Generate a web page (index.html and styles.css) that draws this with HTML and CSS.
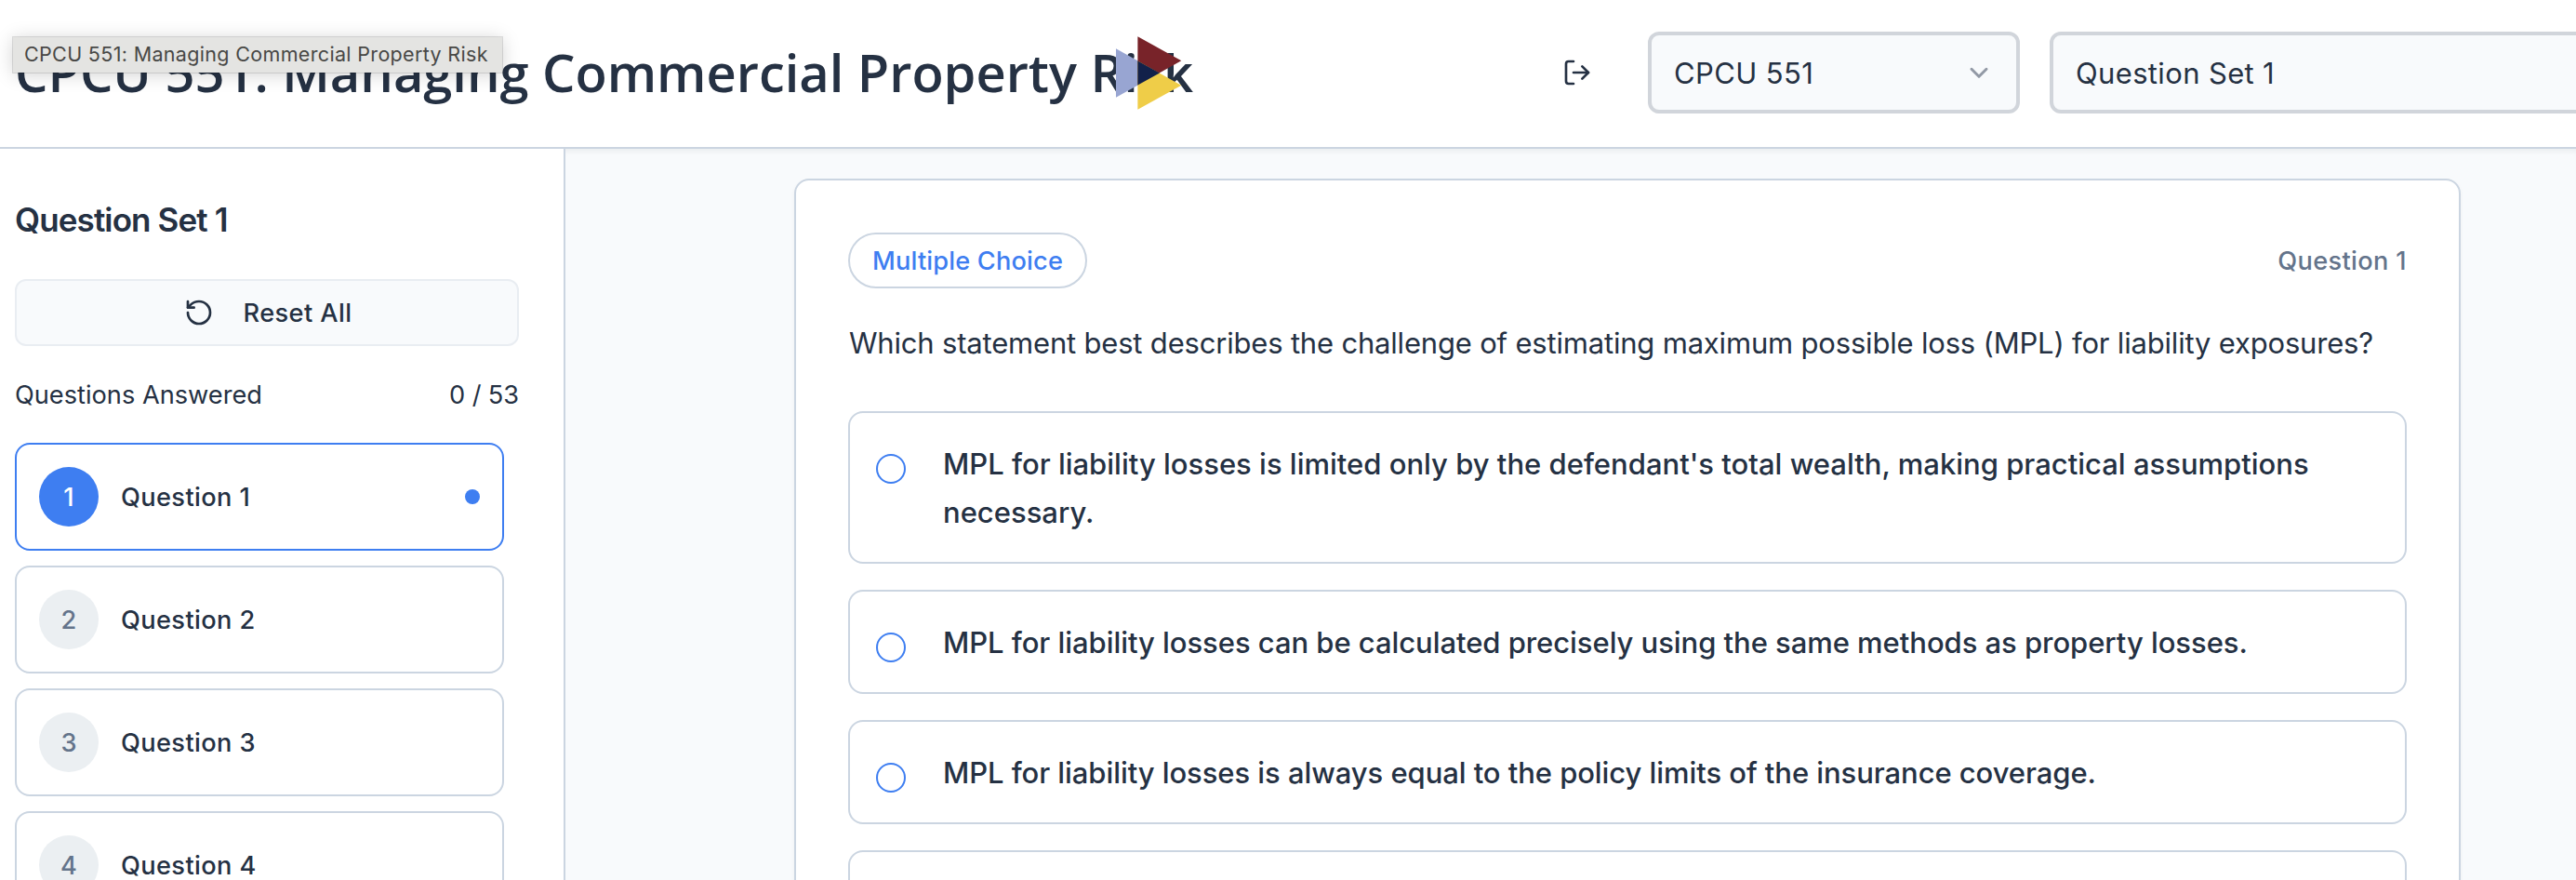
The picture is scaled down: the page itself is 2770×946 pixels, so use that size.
FILE: index.html
```html
<!DOCTYPE html>
<html lang="en">
<head>
<meta charset="utf-8">
<title>CPCU 551: Managing Commercial Property Risk</title>
<link rel="stylesheet" href="styles.css">
</head>
<body>
<header class="header">
  <div class="brand">
    <h1 class="title">CPCU 551: Managing Commercial Property Risk</h1>
    <svg class="logo" viewBox="0 0 72 80" aria-hidden="true">
      <path d="M1 13.3 48 39.5 1 65.7Z" fill="#98a5d2"/>
      <path d="M24.4.2 71.3 26.2 24.4 52.4Z" fill="#782329"/>
      <path d="M24.4 26.6 71.3 52.7 24.4 78.8Z" fill="#efcd48"/>
      <path d="M24.4 26.4 48 39.5 24.4 52.6Z" fill="#12214a"/>
    </svg>
    <div class="tooltip">CPCU 551: Managing Commercial Property Risk</div>
  </div>
  <button class="logout" aria-label="Log out">
    <svg class="icon" viewBox="0 0 24 24"><path d="M9 21H5a2 2 0 0 1-2-2V5a2 2 0 0 1 2-2h4"/><path d="m16 17 5-5-5-5"/><path d="M21 12H9"/></svg>
  </button>
  <div class="selects">
    <div class="select select-course">
      <span class="course-name">CPCU 551</span>
      <svg class="chevron" viewBox="0 0 32 32"><path d="m8 12.3 8 8 8-8"/></svg>
    </div>
    <div class="select select-set"><span class="set-name">Question Set 1</span></div>
  </div>
</header>
<div class="layout">
  <aside class="sidebar">
    <h2 class="side-title">Question Set 1</h2>
    <button class="reset">
      <svg class="icon" viewBox="0 0 24 24"><path d="M3 12a9 9 0 1 0 9-9 9.75 9.75 0 0 0-6.74 2.74L3 8"/><path d="M3 3v5h5"/></svg>
      <span>Reset All</span>
    </button>
    <div class="progress"><span>Questions Answered</span><span class="count">0 / 53</span></div>
    <div class="list">
      <div class="item item-active"><span class="num">1</span><span class="item-label">Question 1</span><span class="dot"></span></div>
      <div class="item"><span class="num">2</span><span class="item-label">Question 2</span></div>
      <div class="item"><span class="num">3</span><span class="item-label">Question 3</span></div>
      <div class="item"><span class="num">4</span><span class="item-label">Question 4</span></div>
    </div>
  </aside>
  <main class="main">
    <section class="card">
      <div class="card-head"><span class="pill">Multiple Choice</span><span class="card-num">Question 1</span></div>
      <p class="prompt">Which statement best describes the challenge of estimating maximum possible loss (MPL) for liability exposures?</p>
      <div class="options">
        <div class="option"><span class="radio"></span><span class="answer answer-a">MPL for liability losses is limited only by the defendant's total wealth, making practical assumptions necessary.</span></div>
        <div class="option"><span class="radio"></span><span class="answer answer-b">MPL for liability losses can be calculated precisely using the same methods as property losses.</span></div>
        <div class="option"><span class="radio"></span><span class="answer answer-c">MPL for liability losses is always equal to the policy limits of the insurance coverage.</span></div>
        <div class="option option-last"></div>
      </div>
    </section>
  </main>
</div>
</body>
</html>
```
FILE: styles.css
```css
:root {
  --ink: #253143;
  --muted: #64748b;
  --line: #cbd5e1;
  --blue: #3e7ef1;
  --surface: #f8fafc;
}
* { box-sizing: border-box; }
html, body { height: 100%; }
body {
  margin: 0;
  display: flex;
  flex-direction: column;
  overflow: hidden;
  background: var(--surface);
  color: var(--ink);
  font-family: Inter, "Liberation Sans", sans-serif;
}
h1, h2, p { margin: 0; }
button { font: inherit; color: inherit; cursor: pointer; }
.icon {
  width: 32px;
  height: 32px;
  flex: none;
  fill: none;
  stroke: currentColor;
  stroke-width: 2;
  stroke-linecap: round;
  stroke-linejoin: round;
}

/* Header */
.header {
  position: relative;
  z-index: 1;
  flex: none;
  display: flex;
  align-items: center;
  height: 160px;
  padding: 0 0 2px 16px;
  background: #fff;
  border-bottom: 2px solid var(--line);
}
.brand { position: relative; flex: none; width: 1664px; }
.title {
  font: 600 56px/80px "Open Sans", "Noto Sans", sans-serif;
  letter-spacing: -.02px;
  white-space: nowrap;
  padding-bottom: 2px;
}
.logo { position: absolute; left: 1183px; top: 2px; width: 72px; height: 80px; }
.tooltip {
  position: absolute;
  left: -2px;
  top: 3px;
  width: 526px;
  height: 38px;
  padding: 0 12px 2px;
  background: #e4e4e2;
  color: #484846;
  font-size: 21.5px;
  line-height: 36px;
  letter-spacing: .333px;
  white-space: nowrap;
  box-shadow: 0 0 0 1px rgba(0, 0, 0, .12), 0 2px 20px rgba(0, 0, 0, .18);
}
.logout { display: flex; flex: none; padding: 0; border: 0; background: none; }
.selects { display: flex; gap: 32px; margin-left: 60px; }
.select {
  display: flex;
  flex: none;
  align-items: center;
  justify-content: space-between;
  height: 88px;
  padding: 0 24px;
  border: 4px solid #d1d5db;
  border-radius: 12px;
  background: var(--surface);
  font-size: 31px;
}
.select-course { width: 400px; }
.select-set { width: 640px; }
.course-name { letter-spacing: .4px; }
.set-name { letter-spacing: .35px; }
.chevron {
  width: 32px;
  height: 32px;
  fill: none;
  stroke: #9299a5;
  stroke-width: 3;
  stroke-linecap: round;
  stroke-linejoin: round;
}

/* Sidebar */
.layout { display: flex; flex: 1; min-height: 0; overflow: hidden; }
.sidebar {
  flex: none;
  width: 608px;
  padding: 56px 48px 0 16px;
  overflow: hidden;
  background: #fff;
  border-right: 2px solid var(--line);
  font-size: 27.2px;
}
.side-title { font-size: 35px; font-weight: 600; line-height: 40px; letter-spacing: -.88px; }
.reset {
  display: flex;
  align-items: center;
  justify-content: center;
  gap: 32px;
  width: 100%;
  height: 72px;
  margin-top: 44px;
  padding: 0 0 0 2px;
  border: 2px solid #e9edf2;
  border-radius: 12px;
  background: var(--surface);
  font-weight: 500;
  letter-spacing: .4px;
}
.progress { display: flex; justify-content: space-between; margin: 33px 0 31px; line-height: 40px; }
.count { letter-spacing: -.1px; }
.list { display: flex; flex-direction: column; gap: 16px; margin-right: 16px; }
.item {
  display: flex;
  flex: none;
  align-items: center;
  gap: 24px;
  height: 116px;
  padding: 0 24px;
  border: 2px solid var(--line);
  border-radius: 16px;
}
.num {
  display: flex;
  align-items: center;
  justify-content: center;
  width: 64px;
  height: 64px;
  border-radius: 50%;
  background: #ebeff2;
  color: var(--muted);
  font-weight: 500;
}
.item-label { font-weight: 500; letter-spacing: .38px; }
.item-active { border-color: var(--blue); }
.item-active .num { background: var(--blue); color: #fff; }
.dot { width: 16px; height: 16px; margin-left: auto; border-radius: 50%; background: var(--blue); }

/* Question card */
.main {
  flex: 1;
  min-width: 0;
  padding: 32px 124px 0 246px;
  overflow: hidden;
  box-shadow: inset 0 6px 6px -4px rgba(15, 23, 42, .07);
}
.card {
  height: 1100px;
  padding: 56px;
  background: #fff;
  border: 2px solid var(--line);
  border-radius: 16px;
  box-shadow: 0 2px 4px rgba(15, 23, 42, .05);
}
.card-head { display: flex; align-items: center; justify-content: space-between; font-size: 27.2px; }
.pill {
  display: flex;
  align-items: center;
  height: 60px;
  padding: 0 24px;
  border: 2px solid var(--line);
  border-radius: 30px;
  color: var(--blue);
  font-weight: 500;
  letter-spacing: .16px;
}
.card-num { color: var(--muted); font-weight: 500; letter-spacing: .35px; }
.prompt { margin: 33px 0 47px 1px; font-size: 31px; line-height: 52px; letter-spacing: -.188px; white-space: nowrap; }
.options { display: flex; flex-direction: column; gap: 28px; }
.option {
  display: flex;
  align-items: flex-start;
  gap: 40px;
  padding: 29px 28px 27px;
  border: 2px solid var(--line);
  border-radius: 16px;
}
.option-last { height: 112px; }
.radio { flex: none; width: 32px; height: 32px; margin-top: 15px; border: 2px solid var(--blue); border-radius: 50%; }
.answer { font-size: 31px; font-weight: 500; line-height: 52px; }
.answer-b { letter-spacing: -.052px; }
.answer-c { letter-spacing: -.07px; }
```
